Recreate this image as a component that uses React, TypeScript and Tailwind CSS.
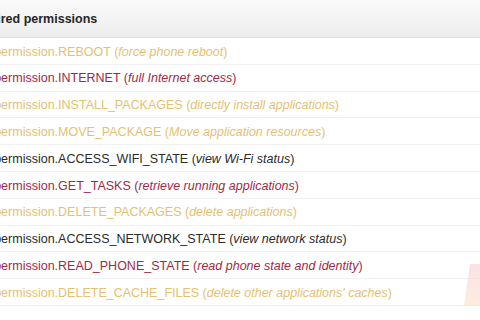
import React from 'react';

type Perm = { name: string; desc: string; tone: 'gold' | 'red' | 'dark' };

const perms: Perm[] = [
  { name: 'REBOOT', desc: 'force phone reboot', tone: 'gold' },
  { name: 'INTERNET', desc: 'full Internet access', tone: 'red' },
  { name: 'INSTALL_PACKAGES', desc: 'directly install applications', tone: 'gold' },
  { name: 'MOVE_PACKAGE', desc: 'Move application resources', tone: 'gold' },
  { name: 'ACCESS_WIFI_STATE', desc: 'view Wi-Fi status', tone: 'dark' },
  { name: 'GET_TASKS', desc: 'retrieve running applications', tone: 'red' },
  { name: 'DELETE_PACKAGES', desc: 'delete applications', tone: 'gold' },
  { name: 'ACCESS_NETWORK_STATE', desc: 'view network status', tone: 'dark' },
  { name: 'READ_PHONE_STATE', desc: 'read phone state and identity', tone: 'red' },
  { name: 'DELETE_CACHE_FILES', desc: "delete other applications' caches", tone: 'gold' },
];

const toneClass = {
  gold: 'text-[#e4c172]',
  red: 'text-[#a02a45]',
  dark: 'text-[#2a2a2a]',
};

export default function App() {
  return (
    <div
      className="w-[480px] h-[320px] overflow-hidden bg-white relative"
      style={{ fontFamily: '"Liberation Sans", Arial, sans-serif' }}
    >
      <div className="h-[38px] flex items-center bg-gradient-to-b from-[#fafafa] to-[#ededed] border-b border-[#e0e0e0]">
        <span className="-ml-[34px] pt-[1px] text-[12.5px] font-bold text-[#262626]">Required permissions</span>
      </div>

      <div className="flex flex-col">
        {perms.map((p) => (
          <div
            key={p.name}
            className={`h-[26.8px] flex items-center border-b border-[#f2f2f2] text-[12.5px] whitespace-nowrap pt-[2px] ${toneClass[p.tone]}`}
          >
            <span className="-ml-[51px]">
              android.permission.{p.name} (<i>{p.desc}</i>)
            </span>
          </div>
        ))}
      </div>

      {/* faded watermark */}
      <svg className="absolute right-0 top-[262px]" width="18" height="46" viewBox="0 0 18 46">
        <defs>
          <linearGradient id="wm" x1="0" y1="0" x2="0" y2="1">
            <stop offset="0" stopColor="#f5c4cc" />
            <stop offset="1" stopColor="#fbdcc0" />
          </linearGradient>
        </defs>
        <path d="M8 2 L18 2 L18 44 L2 44 Z" fill="url(#wm)" opacity="0.5" />
      </svg>
    </div>
  );
}
